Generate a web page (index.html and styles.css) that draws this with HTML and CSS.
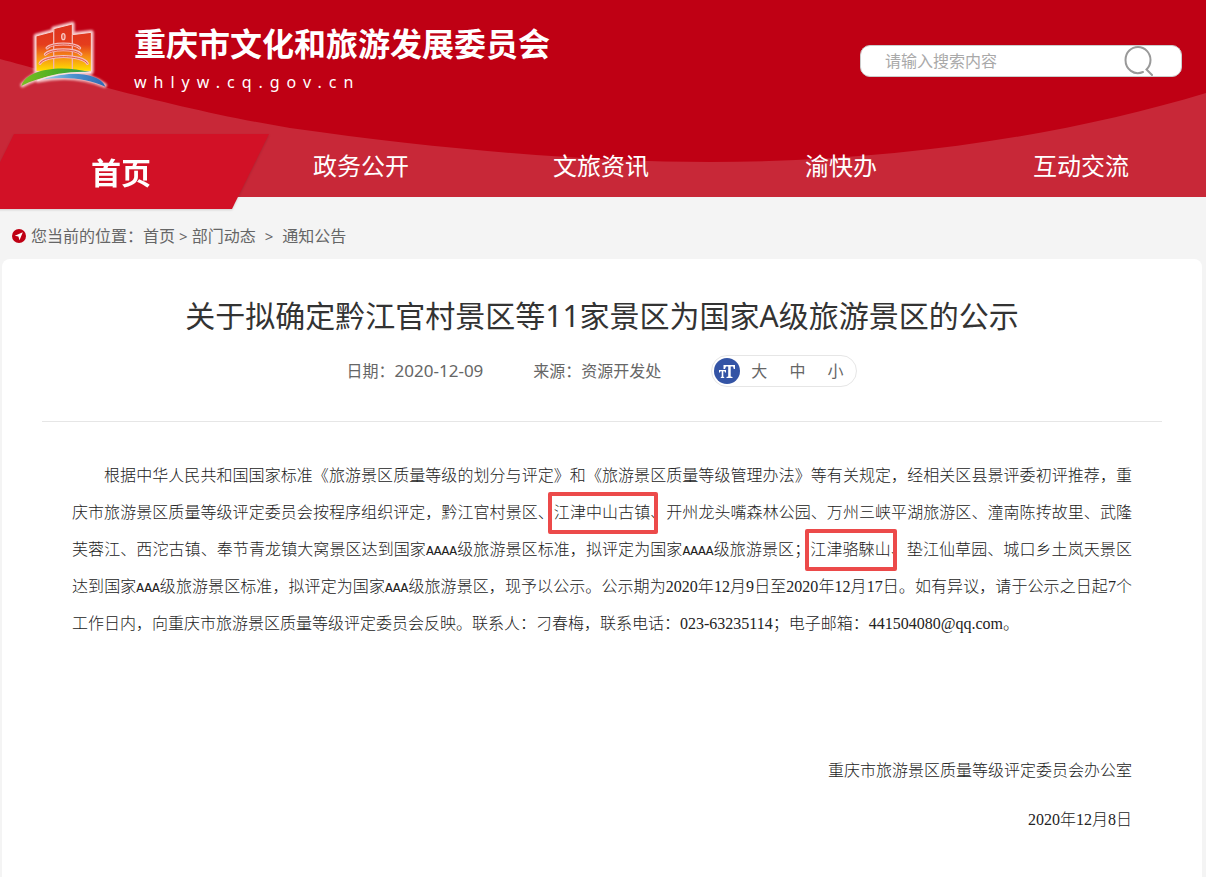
FILE: index.html
```html
<!DOCTYPE html>
<html lang="zh-CN">
<head>
<meta charset="utf-8">
<meta name="viewport" content="width=device-width, initial-scale=1">
<title>重庆市文化和旅游发展委员会</title>
<link rel="stylesheet" href="styles.css">
</head>
<body>
<header class="site-header">
  <svg class="header-wave" viewBox="0 0 1206 197" preserveAspectRatio="none" aria-hidden="true">
    <path d="M0 59C60 75 180 110 290 128C460 152 600 162 710 162C900 162 1070 134 1206 93V197H0Z" fill="#c82838"/>
  </svg>
  <div class="header-top">
    <a class="brand" href="#">
      <svg class="logo" viewBox="0 0 330 270" aria-hidden="true">
        <defs>
          <linearGradient id="tower" x1="0" y1="40" x2="0" y2="182" gradientUnits="userSpaceOnUse">
            <stop offset="0" stop-color="#dc3220"/><stop offset=".45" stop-color="#e53d1c"/><stop offset=".7" stop-color="#f58a16"/><stop offset="1" stop-color="#ffdf00"/>
          </linearGradient>
          <linearGradient id="hill" x1="40" y1="0" x2="240" y2="0" gradientUnits="userSpaceOnUse">
            <stop offset="0" stop-color="#77bd22"/><stop offset=".5" stop-color="#4caf25"/><stop offset="1" stop-color="#2a9650"/>
          </linearGradient>
          <linearGradient id="river" x1="90" y1="0" x2="285" y2="0" gradientUnits="userSpaceOnUse">
            <stop offset="0" stop-color="#a9d8f0"/><stop offset=".5" stop-color="#4d93d0"/><stop offset="1" stop-color="#2f69b3"/>
          </linearGradient>
          <filter id="glow" x="-10%" y="-10%" width="120%" height="120%"><feGaussianBlur stdDeviation="3"/></filter>
        </defs>
        <g fill="#f6c3c6" stroke="#f6c3c6" stroke-width="14" stroke-linejoin="round" filter="url(#glow)">
          <path d="M78 78L131 64V56L187 42V74L244 67V184H78Z"/>
          <path d="M38 225C75 180 160 165 243 187C180 184 95 193 38 225Z"/>
          <path d="M84 211C160 185 240 190 284 226C225 202 155 195 84 211Z"/>
        </g>
        <path d="M78 78L131 64V56L187 42V74L244 67V184H78Z" fill="url(#tower)" stroke="#f9d3d3" stroke-width="3"/>
        <path d="M131 56V182M187 74V182" stroke="#f2b3ad" stroke-width="4"/>
        <ellipse cx="160" cy="80" rx="5" ry="9" fill="#e75a43" stroke="#f7c6c1" stroke-width="4"/>
        <g fill="none" stroke="#f6bfc0" stroke-width="9" stroke-linecap="round">
          <path d="M111 114C125 98 195 98 209 114"/><path d="M106 133C122 115 198 115 213 133"/><path d="M90 160C104 133 218 133 232 160"/>
        </g>
        <g fill="none" stroke="#e2553f" stroke-width="3" stroke-linecap="round">
          <path d="M111 114C125 98 195 98 209 114"/><path d="M106 133C122 115 198 115 213 133"/><path d="M90 160C104 133 218 133 232 160"/>
        </g>
        <path d="M34 228C48 178 148 162 243 187C165 187 95 197 34 228Z" fill="url(#hill)"/>
        <path d="M84 211C160 180 270 185 286 230C230 203 155 197 84 211Z" fill="url(#river)"/>
        <path d="M82 212C135 190 190 186 243 188" fill="none" stroke="#f7dfe0" stroke-width="4"/>
      </svg>
      <span class="brand-text">
        <strong class="brand-name">重庆市文化和旅游发展委员会</strong>
        <span class="brand-url">whlyw.cq.gov.cn</span>
      </span>
    </a>
    <form class="search" role="search">
      <input class="search-input" type="text" placeholder="请输入搜索内容" aria-label="搜索内容">
      <button class="search-button" type="button" aria-label="搜索">
        <svg width="30" height="30" viewBox="0 0 30 30" fill="none" stroke="#999" stroke-width="2" stroke-linecap="round" aria-hidden="true">
          <path d="M19 26C10 30 1.500 23 1.500 14C1.500 6 7.500 1 14 1C21 1 26.500 7 26.500 14C26.500 18 25 21 22.500 23.500L28 29"/>
        </svg>
      </button>
    </form>
  </div>
  <nav class="nav">
    <ul class="nav-list">
      <li class="nav-item nav-item-current"><a class="nav-link" href="#">首页</a></li>
      <li class="nav-item"><a class="nav-link" href="#">政务公开</a></li>
      <li class="nav-item"><a class="nav-link" href="#">文旅资讯</a></li>
      <li class="nav-item"><a class="nav-link" href="#">渝快办</a></li>
      <li class="nav-item"><a class="nav-link" href="#">互动交流</a></li>
    </ul>
  </nav>
</header>
<div class="breadcrumb">
  <svg class="breadcrumb-icon" width="14" height="14" viewBox="0 0 14 14" aria-hidden="true"><circle cx="7" cy="7" r="7" fill="#bf0014"/><path d="M10.800 3.200L2.800 6.800L6.400 7.500L7.500 11.200Z" fill="#fff"/></svg>
  <span>您当前的位置：</span>
  <a href="#">首页</a><span class="crumb-sep">&gt;</span><a href="#">部门动态</a><span class="crumb-sep crumb-sep-wide">&gt;</span><a href="#">通知公告</a>
</div>
<main class="panel">
  <div class="article-head">
    <h1 class="title">关于拟确定黔江官村景区等11家景区为国家A级旅游景区的公示</h1>
    <div class="meta">
      <span>日期：<span class="date">2020-12-09</span></span>
      <span>来源：资源开发处</span>
      <div class="sizer">
        <svg width="26" height="26" viewBox="0 0 26 26" aria-hidden="true"><circle cx="13" cy="13" r="13" fill="#3454a5"/><path d="M9.500 7H21V11H19.800L19 8.500H16.700V18.500L18.500 19V20H12.500V19L14.200 18.500V8.500H12L11 11H9.500ZM5 12H12V14.500H11L10.600 13.200H9.300V18.800L10.200 19V20H6.800V19L7.700 18.800V13.200H6.400L6 14.500H5Z" fill="#fff"/></svg>
        <button type="button">大</button><button type="button">中</button><button type="button">小</button>
      </div>
    </div>
  </div>
  <article class="article">
    <p class="article-text">根据中华人民共和国国家标准《旅游景区质量等级的划分与评定》和《旅游景区质量等级管理办法》等有关规定，经相关区县景评委初评推荐，重庆市旅游景区质量等级评定委员会按程序组织评定，黔江官村景区、<span class="mark">江津中山古镇</span>、开州龙头嘴森林公园、万州三峡平湖旅游区、潼南陈抟故里、武隆芙蓉江、西沱古镇、奉节青龙镇大窝景区达到国家<span class="grade">AAAA</span>级旅游景区标准，拟评定为国家<span class="grade">AAAA</span>级旅游景区；<span class="mark mark-tight">江津骆騋山</span>、垫江仙草园、城口乡土岚天景区达到国家<span class="grade">AAA</span>级旅游景区标准，拟评定为国家<span class="grade">AAA</span>级旅游景区，现予以公示。公示期为2020年12月9日至2020年12月17日。如有异议，请于公示之日起7个工作日内，向重庆市旅游景区质量等级评定委员会反映。联系人：刁春梅，联系电话：023-63235114；电子邮箱：441504080@qq.com。</p>
    <div class="signature">
      <p>重庆市旅游景区质量等级评定委员会办公室</p>
      <p>2020年12月8日</p>
    </div>
  </article>
</main>
</body>
</html>
```
FILE: styles.css
```css
* { box-sizing: border-box; }

body {
  margin: 0;
  min-height: 100vh;
  display: flex;
  flex-direction: column;
  background: #f4f4f4;
  color: #666;
  font: 16px/24px "Noto Sans", "Noto Sans CJK SC", sans-serif;
  text-spacing-trim: space-all;
}

a { color: inherit; text-decoration: none; }
button { padding: 0; border: 0; background: none; color: inherit; font: inherit; cursor: pointer; }
h1, p, ul { margin: 0; padding: 0; }

.site-header { position: relative; background: #bf0014; color: #fff; }
.header-wave { position: absolute; inset: 0; width: 100%; height: 100%; }
.header-top {
  position: relative;
  display: flex;
  justify-content: space-between;
  align-items: flex-start;
  height: 134px;
  padding: 10px 24px 0 10px;
}
.brand { display: flex; gap: 14px; }
.logo { width: 110px; height: 90px; }
.brand-text { display: flex; flex-direction: column; padding-top: 12px; }
.brand-name { font-size: 32px; line-height: 44px; }
.brand-url { font-size: 16px; line-height: 32px; letter-spacing: 7px; }

.search {
  display: flex;
  width: 322px;
  height: 32px;
  margin-top: 35px;
  padding: 0 27px 0 24px;
  background: #fff;
  border: 1px solid #ccc;
  border-radius: 10px;
}
.search-input { flex: 1; min-width: 0; padding: 0; border: 0; outline: 0; background: none; font: inherit; color: #333; }
.search-input::placeholder { color: #a9a9a9; }
.search-button svg { display: block; }

.nav { position: relative; padding: 0 5px 0 1px; }
.nav-list { display: flex; height: 63px; list-style: none; }
.nav-item { flex: 1; text-align: center; font-size: 24px; line-height: 63px; }
.nav-link { display: block; }
.nav-item-current {
  position: relative;
  height: 75px;
  font-size: 30px;
  font-weight: bold;
  line-height: 78px;
  filter: drop-shadow(0 1px 1px rgba(0, 0, 0, .15));
}
.nav-item-current::before {
  content: "";
  position: absolute;
  inset: 0 -28px 0 -24px;
  background: #d21126;
  clip-path: polygon(37px 0, 100% 0, calc(100% - 37px) 100%, 0 100%);
}
.nav-item-current .nav-link { position: relative; }

.breadcrumb { display: flex; align-items: center; height: 62px; padding: 16px 12px 0; }
.breadcrumb-icon { margin-right: 5px; }
.crumb-sep { margin: 0 4px; font-size: 15px; }
.crumb-sep-wide { margin: 0 9px; }

.panel { flex: 1; margin: 0 4px 0 2px; padding: 0 40px 40px; background: #fff; border-radius: 8px 8px 0 0; }
.article-head { padding: 35px 0 34px; border-bottom: 1px solid #e6e6e6; }
.title { color: #333; font-size: 30px; font-weight: 400; line-height: 44px; text-align: center; }
.meta { display: flex; justify-content: center; align-items: center; gap: 50px; margin-top: 17px; }
.date { font-size: 17px; }
.sizer { display: flex; align-items: center; gap: 22px; height: 32px; padding: 0 13px 0 2px; border: 1px solid #e6e6e6; border-radius: 16px; }
.sizer svg { margin-right: -11px; }

.article { padding: 35px 30px 0; color: #222; font-family: "Liberation Serif", "Noto Sans CJK SC", serif; font-weight: 300; line-height: 37px; }
.article-text { text-align: justify; text-indent: 32px; }
.grade { font-family: "Liberation Mono", monospace; font-size: 13px; line-height: 16px; }
.mark { position: relative; text-indent: 0; }
.mark::after {
  content: "";
  position: absolute;
  inset: -12px -8px -13px -6px;
  border: 4px solid #ec4a4a;
  border-radius: 2px;
}
.mark-tight::after { right: -6px; left: -5px; }
.signature { margin-top: 110px; text-align: right; }
.signature p + p { margin-top: 12px; }
```
